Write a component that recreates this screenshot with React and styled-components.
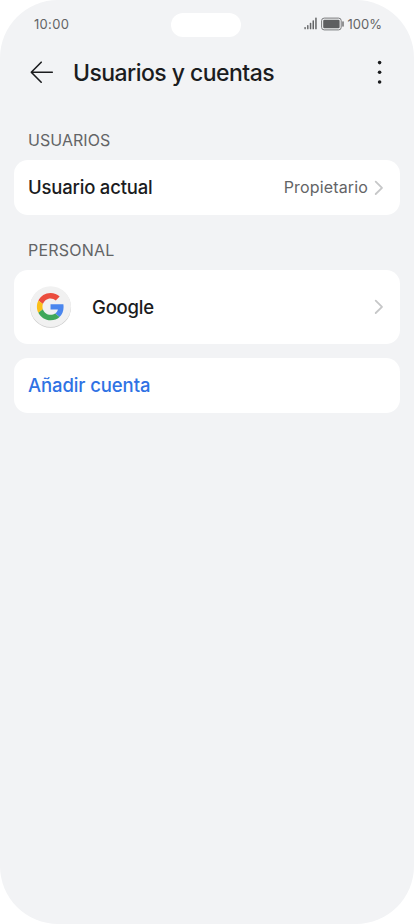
import React from 'react';
import styled, { createGlobalStyle } from 'styled-components';

const ink = '#1b1c1e';
const gray = '#636466';
const blue = '#2f72e4';

const App = () => (
  <>
    <GlobalStyle />
    <Screen>
      <StatusBar>
        <Clock>10:00</Clock>
        <Camera />
        <Indicators>
          <SignalIcon />
          <BatteryIcon />
          <Percent>100%</Percent>
        </Indicators>
      </StatusBar>
      <Header>
        <BackIcon />
        <Title>Usuarios y cuentas</Title>
        <MoreIcon />
      </Header>
      <SectionTitle ls={0.05}>USUARIOS</SectionTitle>
      <Card height={55}>
        <Label ls={-0.2}>Usuario actual</Label>
        <Value>Propietario</Value>
        <Chevron />
      </Card>
      <SectionTitle ls={0.2}>PERSONAL</SectionTitle>
      <Card height={74}>
        <GoogleIcon />
        <Label ls={-0.2}>Google</Label>
        <Chevron />
      </Card>
      <Card height={55} gap={13.5}>
        <AddAccount>Añadir cuenta</AddAccount>
      </Card>
    </Screen>
  </>
);

export default App;

const SignalIcon = () => (
  <svg width='14' height='13' viewBox='0 0 14 13' fill={gray}>
    <rect x='0.4' y='10' width='1.4' height='2.3' rx='0.6' />
    <rect x='3.1' y='8.1' width='1.4' height='4.2' rx='0.6' />
    <rect x='5.8' y='5.8' width='1.5' height='6.5' rx='0.6' />
    <rect x='8.5' y='3.3' width='1.5' height='9' rx='0.6' />
    <rect x='11.2' y='0.4' width='1.5' height='11.9' rx='0.6' />
  </svg>
);

const BatteryIcon = () => (
  <Battery width='24' height='14' viewBox='0 0 24 14'>
    <rect
      x='0.6'
      y='1.1'
      width='19.6'
      height='11.8'
      rx='2.6'
      fill='none'
      stroke='#77787a'
      strokeWidth='1'
    />
    <rect x='2.2' y='2.8' width='16.4' height='8.4' rx='1.2' fill='#5e5f61' />
    <rect x='21.2' y='4.2' width='1.6' height='5.6' rx='0.7' fill='#77787a' />
  </Battery>
);

const BackIcon = () => (
  <svg
    width='24'
    height='24'
    viewBox='0 0 24 24'
    fill='none'
    stroke={ink}
    strokeWidth='1.6'
    strokeLinecap='round'
    strokeLinejoin='round'
  >
    <path d='M22.3 12.2H1.3M11.2 2.2L1.3 12.2l9.9 10' />
  </svg>
);

const MoreIcon = () => (
  <svg width='6' height='26' viewBox='0 0 6 26' fill={ink}>
    <circle cx='2.6' cy='3.6' r='1.8' />
    <circle cx='2.6' cy='13.3' r='1.8' />
    <circle cx='2.6' cy='23' r='1.8' />
  </svg>
);

const Chevron = () => (
  <ChevronSvg width='10' height='16' viewBox='0 0 10 16'>
    <path d='M1.7 1.6L8 7.8l-6.3 6.2' />
  </ChevronSvg>
);

const GoogleIcon = () => (
  <GoogleSvg width='42' height='43' viewBox='0 0 42 43'>
    <circle cx='20.6' cy='21.4' r='20.4' fill='#c9c9c9' />
    <circle cx='20.6' cy='20.6' r='20.4' fill='#f1f1f1' />
    <g transform='translate(6.9 7) scale(0.568)'>
      <path
        fill='#eb4d3e'
        d='M24 9.5c3.54 0 6.71 1.22 9.21 3.6l6.85-6.85C35.9 2.38 30.47 0 24 0 14.62 0 6.51 5.38 2.56 13.22l7.98 6.19C12.43 13.72 17.74 9.5 24 9.5z'
      />
      <path
        fill='#4a86ee'
        d='M46.98 24.55c0-1.57-.15-3.09-.38-4.55H24v9.02h12.94c-.58 2.96-2.26 5.48-4.78 7.18l7.73 6c4.51-4.18 7.09-10.36 7.09-17.65z'
      />
      <path
        fill='#fbbf18'
        d='M10.53 28.59c-.48-1.45-.76-2.99-.76-4.59s.27-3.14.76-4.59l-7.98-6.19C.92 16.46 0 20.12 0 24s.92 7.54 2.56 10.78l7.97-6.19z'
      />
      <path
        fill='#3fa75a'
        d='M24 48c6.48 0 11.93-2.13 15.89-5.81l-7.73-6c-2.15 1.45-4.92 2.3-8.16 2.3-6.26 0-11.57-4.22-13.47-9.91l-7.98 6.19C6.51 42.62 14.62 48 24 48z'
      />
    </g>
  </GoogleSvg>
);

const GlobalStyle = createGlobalStyle`
  * {
    box-sizing: border-box;
  }
  body {
    margin: 0;
    background: #fff;
    font-family: Inter, 'Liberation Sans', sans-serif;
  }
  svg {
    display: block;
    flex-shrink: 0;
  }
`;

const Screen = styled.main`
  width: 414px;
  height: 924px;
  padding: 0 14px;
  border-radius: 58px;
  background: #f2f3f5;
  overflow: hidden;
`;

const StatusBar = styled.div`
  display: grid;
  grid-template-columns: 137px 70px 1fr;
  align-items: center;
  height: 48px;
  padding: 0 18px 0 20px;
  color: ${gray};
`;

const Clock = styled.span`
  font-size: 13px;
  letter-spacing: 0.3px;
  margin-bottom: 1px;
`;

const Camera = styled.div`
  height: 24px;
  border-radius: 12px;
  background: #fff;
  margin-top: 1px;
`;

const Indicators = styled.div`
  display: flex;
  align-items: center;
  justify-content: flex-end;
  margin-bottom: 1px;
`;

const Battery = styled.svg`
  margin: 0 3px;
`;

const Percent = styled.span`
  font-size: 13px;
  letter-spacing: 0;
`;

const Header = styled.header`
  display: flex;
  align-items: center;
  height: 48px;
  padding: 0 17px 0 16px;
`;

const Title = styled.h1`
  flex: 1;
  margin: 2px 0 0 19px;
  font-size: 23px;
  font-weight: 500;
  line-height: 30px;
  letter-spacing: -0.55px;
  color: ${ink};
`;

const SectionTitle = styled.h2`
  margin: 0;
  padding: 0 14px;
  font-size: 16px;
  font-weight: 400;
  line-height: 20px;
  letter-spacing: ${({ ls }) => ls}px;
  color: ${gray};

  ${Header} + & {
    padding-top: 34px;
  }
`;

const Card = styled.section`
  display: flex;
  align-items: center;
  height: ${({ height }) => height}px;
  padding: 0 15px 0 14px;
  margin-top: ${({ gap }) => gap || 10}px;
  border-radius: 14px;
  background: #fff;

  & + ${SectionTitle} {
    padding-top: 25px;
  }
`;

const Label = styled.span`
  flex: 1;
  margin-bottom: 1px;
  font-size: 18.5px;
  font-weight: 500;
  letter-spacing: ${({ ls }) => ls}px;
  color: ${ink};
`;

const AddAccount = styled.button`
  padding: 0;
  margin-bottom: 1px;
  border: none;
  background: none;
  font: 500 18.5px Inter, 'Liberation Sans', sans-serif;
  letter-spacing: -0.1px;
  color: ${blue};
`;

const Value = styled.span`
  margin-bottom: 1px;
  font-size: 16px;
  letter-spacing: 0.15px;
  color: ${gray};
`;

const ChevronSvg = styled.svg`
  margin: 0 1px 0 6px;
  fill: none;
  stroke: #c6c7c8;
  stroke-width: 1.8;
  stroke-linecap: round;
  stroke-linejoin: round;
`;

const GoogleSvg = styled.svg`
  margin: 0 20px 0 2px;
`;
